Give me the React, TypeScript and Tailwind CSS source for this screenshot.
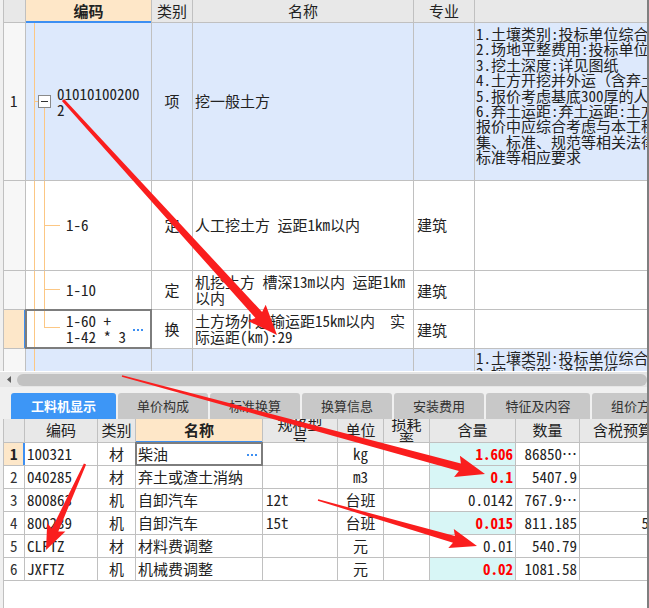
import React from 'react';

type Pt = [number, number];

// tapered annotation arrow: thin tail, wide shaft near head, triangular head
function arrowPoints(from: Pt, tip: Pt, w1: number, w2: number, headLen: number, headHalf: number) {
  const dx = tip[0] - from[0];
  const dy = tip[1] - from[1];
  const len = Math.hypot(dx, dy);
  const ux = dx / len;
  const uy = dy / len;
  const nx = -uy;
  const ny = ux;
  const bx = tip[0] - ux * headLen;
  const by = tip[1] - uy * headLen;
  const pts: Pt[] = [
    [from[0] + (nx * w1) / 2, from[1] + (ny * w1) / 2],
    [bx + (nx * w2) / 2, by + (ny * w2) / 2],
    [bx + nx * headHalf - ux * 3, by + ny * headHalf - uy * 3],
    tip,
    [bx - nx * headHalf - ux * 3, by - ny * headHalf - uy * 3],
    [bx - (nx * w2) / 2, by - (ny * w2) / 2],
    [from[0] - (nx * w1) / 2, from[1] - (ny * w1) / 2],
  ];
  return pts.map((p) => `${p[0].toFixed(1)},${p[1].toFixed(1)}`).join(' ');
}

const arrows = [
  arrowPoints([63, 100], [277, 335], 3, 9, 27, 12),
  arrowPoints([122, 376], [485, 474], 1.5, 8, 26, 11),
  arrowPoints([318, 500], [477, 546], 1.5, 7, 24, 10),
  arrowPoints([85, 464], [46, 550], 2.5, 7, 22, 10),
];

const Dots = () => (
  <span className="flex gap-[2px]">
    <span className="w-[2px] h-[2px] bg-[#3d8ff2]" />
    <span className="w-[2px] h-[2px] bg-[#3d8ff2]" />
    <span className="w-[2px] h-[2px] bg-[#3d8ff2]" />
  </span>
);

const descLines = [
  '1.土壤类别:投标单位综合考虑',
  '2.场地平整费用:投标单位综合考虑',
  '3.挖土深度:详见图纸',
  '4.土方开挖并外运（含弃土场费用）',
  '5.报价考虑基底300厚的人工清底',
  '6.弃土运距:弃土运距:土方外运距离',
  '报价中应综合考虑与本工程相关的',
  '集、标准、规范等相关法律法规',
  '标准等相应要求',
];

interface ResRow {
  n: string;
  code: string;
  type: string;
  name: string;
  spec: string;
  unit: string;
  qty: string;
  red: boolean;
  amt: string;
  price: string;
}

const resRows: ResRow[] = [
  { n: '1', code: '100321', type: '材', name: '柴油', spec: '', unit: 'kg', qty: '1.606', red: true, amt: '86850…', price: '' },
  { n: '2', code: '040285', type: '材', name: '弃土或渣土消纳', spec: '', unit: 'm3', qty: '0.1', red: true, amt: '5407.9', price: '' },
  { n: '3', code: '800863', type: '机', name: '自卸汽车', spec: '12t', unit: '台班', qty: '0.0142', red: false, amt: '767.9…', price: '' },
  { n: '4', code: '800239', type: '机', name: '自卸汽车', spec: '15t', unit: '台班', qty: '0.015', red: true, amt: '811.185', price: '58.69' },
  { n: '5', code: 'CLFTZ', type: '材', name: '材料费调整', spec: '', unit: '元', qty: '0.01', red: false, amt: '540.79', price: '' },
  { n: '6', code: 'JXFTZ', type: '机', name: '机械费调整', spec: '', unit: '元', qty: '0.02', red: true, amt: '1081.58', price: '' },
];

const tabs = ['工料机显示', '单价构成', '标准换算', '换算信息', '安装费用', '特征及内容', '组价方案'];
const tabWidths = ['w-[105px]', 'w-[90px]', 'w-[90px]', 'w-[90px]', 'w-[90px]', 'w-[104px]', 'w-[90px]'];

export default function App() {
  return (
    <div className="relative w-[649px] h-[608px] overflow-hidden bg-[#f0f0f0] border-r-2 border-[#7f7f7f] text-[15px] text-[#222] font-['Noto_Sans_Mono_CJK_SC','Noto_Sans_CJK_SC','DejaVu_Sans_Mono',monospace]">
      {/* top grid: bill items */}
      <div className="h-[371px] ml-[3px] overflow-hidden border-l border-[#c0c0c0] bg-white">
        <div className="flex h-[23px] border-b border-[#c0c0c0] bg-[#e8e8e8] leading-[22px]">
          <div className="w-[22px] shrink-0 border-r border-[#c0c0c0]" />
          <div className="relative w-[126px] shrink-0 border-r border-[#c0c0c0] bg-[#fee7c8] font-bold text-center">
            编码
            <span className="absolute left-0 right-0 bottom-[-1px] h-[2px] bg-[#3d8ff2]" />
          </div>
          <div className="w-[41px] shrink-0 border-r border-[#c0c0c0] text-center">类别</div>
          <div className="w-[221px] shrink-0 border-r border-[#c0c0c0] text-center">名称</div>
          <div className="w-[61px] shrink-0 border-r border-[#c0c0c0] text-center">专业</div>
          <div className="w-[200px] shrink-0" />
        </div>

        {/* row 1 */}
        <div className="flex h-[158px] border-b border-[#c0c0c0]">
          <div className="w-[22px] shrink-0 border-r border-[#c0c0c0] bg-[#f7f7f7] flex items-center pl-[6px]">1</div>
          <div className="relative w-[126px] shrink-0 border-r border-[#c0c0c0] bg-[#dde9fc] flex items-center pl-[31px] leading-[16px]">
            <span className="absolute left-[8px] top-0 bottom-0 w-px bg-[#fcc784]" />
            <span className="absolute left-[8px] top-[78px] w-[4px] h-px bg-[#fcc784]" />
            <span className="absolute left-[12px] top-[72px] w-[13px] h-[13px] border border-[#8a8a8a] bg-white flex items-center justify-center">
              <span className="w-[7px] h-px bg-[#333]" />
            </span>
            <span className="absolute left-[18px] top-[85px] bottom-0 w-px bg-[#fcc784]" />
            <div className="flex flex-col">
              <span>01010100200</span>
              <span>2</span>
            </div>
          </div>
          <div className="w-[41px] shrink-0 border-r border-[#c0c0c0] bg-[#dde9fc] flex items-center justify-center">项</div>
          <div className="w-[221px] shrink-0 border-r border-[#c0c0c0] bg-[#dde9fc] flex items-center pl-[2px]">挖一般土方</div>
          <div className="w-[61px] shrink-0 border-r border-[#c0c0c0] bg-[#dde9fc]" />
          <div className="w-[200px] shrink-0 bg-[#dde9fc] pl-[1px] pt-[3px] leading-[15.4px] whitespace-nowrap overflow-hidden">
            {descLines.map((l) => (
              <div key={l}>{l}</div>
            ))}
          </div>
        </div>

        {/* row 2 */}
        <div className="flex h-[90px] border-b border-[#c0c0c0]">
          <div className="w-[22px] shrink-0 border-r border-[#c0c0c0] bg-[#f7f7f7]" />
          <div className="relative w-[126px] shrink-0 border-r border-[#c0c0c0] flex items-center pl-[40px]">
            <span className="absolute left-[8px] top-0 bottom-0 w-px bg-[#fcc784]" />
            <span className="absolute left-[18px] top-0 bottom-0 w-px bg-[#fcc784]" />
            <span className="absolute left-[18px] top-[44px] w-[16px] h-px bg-[#fcc784]" />
            1-6
          </div>
          <div className="w-[41px] shrink-0 border-r border-[#c0c0c0] flex items-center justify-center">定</div>
          <div className="w-[221px] shrink-0 border-r border-[#c0c0c0] flex items-center pl-[2px] whitespace-nowrap">人工挖土方 运距1km以内</div>
          <div className="w-[61px] shrink-0 border-r border-[#c0c0c0] flex items-center pl-[3px]">建筑</div>
          <div className="w-[200px] shrink-0" />
        </div>

        {/* row 3 */}
        <div className="flex h-[39px] border-b border-[#c0c0c0]">
          <div className="w-[22px] shrink-0 border-r border-[#c0c0c0] bg-[#f7f7f7]" />
          <div className="relative w-[126px] shrink-0 border-r border-[#c0c0c0] flex items-center pl-[40px]">
            <span className="absolute left-[8px] top-0 bottom-0 w-px bg-[#fcc784]" />
            <span className="absolute left-[18px] top-0 bottom-0 w-px bg-[#fcc784]" />
            <span className="absolute left-[18px] top-[18px] w-[16px] h-px bg-[#fcc784]" />
            1-10
          </div>
          <div className="w-[41px] shrink-0 border-r border-[#c0c0c0] flex items-center justify-center">定</div>
          <div className="w-[221px] shrink-0 border-r border-[#c0c0c0] flex flex-col justify-center pl-[2px] leading-[16px] whitespace-nowrap">
            <span>机挖土方 槽深13m以内 运距1km</span>
            <span>以内</span>
          </div>
          <div className="w-[61px] shrink-0 border-r border-[#c0c0c0] flex items-center pl-[3px] pt-[2px]">建筑</div>
          <div className="w-[200px] shrink-0" />
        </div>

        {/* row 4 (selected) */}
        <div className="flex h-[39px] border-b border-[#c0c0c0]">
          <div className="w-[22px] shrink-0 border-r-2 border-[#3d8ff2] bg-[#fde7c9]" />
          <div className="relative w-[126px] shrink-0 border-r border-[#c0c0c0] flex items-center pl-[40px] leading-[16px]">
            <span className="absolute left-[8px] top-0 bottom-0 w-px bg-[#fcc784]" />
            <span className="absolute left-[18px] top-0 h-[17px] w-px bg-[#fcc784]" />
            <span className="absolute left-[18px] top-[17px] w-[16px] h-px bg-[#fcc784]" />
            <div className="flex flex-col whitespace-pre">
              <span>1-60 +</span>
              <span>1-42 * 3</span>
            </div>
            <span className="absolute left-[107px] top-[19px]">
              <Dots />
            </span>
            <span className="absolute left-[-1px] top-[-1px] right-[-1px] bottom-[-1px] border-2 border-[#7d7d7d]" />
          </div>
          <div className="w-[41px] shrink-0 border-r border-[#c0c0c0] flex items-center justify-center">换</div>
          <div className="w-[221px] shrink-0 border-r border-[#c0c0c0] flex flex-col justify-center pl-[2px] leading-[16px] whitespace-pre">
            <span>土方场外运输运距15km以内  实</span>
            <span>际运距(km):29</span>
          </div>
          <div className="w-[61px] shrink-0 border-r border-[#c0c0c0] flex items-center pl-[3px] pt-[2px]">建筑</div>
          <div className="w-[200px] shrink-0" />
        </div>

        {/* row 5 (partly visible) */}
        <div className="flex h-[60px]">
          <div className="w-[22px] shrink-0 border-r border-[#c0c0c0] bg-[#f7f7f7]" />
          <div className="relative w-[126px] shrink-0 border-r border-[#c0c0c0] bg-[#dde9fc]">
            <span className="absolute left-[8px] top-0 bottom-0 w-px bg-[#fcc784]" />
          </div>
          <div className="w-[41px] shrink-0 border-r border-[#c0c0c0] bg-[#dde9fc]" />
          <div className="w-[221px] shrink-0 border-r border-[#c0c0c0] bg-[#dde9fc]" />
          <div className="w-[61px] shrink-0 border-r border-[#c0c0c0] bg-[#dde9fc]" />
          <div className="w-[200px] shrink-0 bg-[#dde9fc] pl-[1px] pt-[1px] leading-[15.4px] whitespace-nowrap">
            <div>1.土壤类别:投标单位综合考虑</div>
            <div>2.挖土深度:详见图纸</div>
          </div>
        </div>
      </div>

      {/* horizontal scrollbar */}
      <div className="h-px bg-white" />
      <div className="flex items-center h-[15px] bg-[#e6e6e6]">
        <svg width="17" height="15" viewBox="0 0 17 15" className="shrink-0">
          <path d="M7 7.5 L11 4 L11 11 Z" fill="#606060" />
        </svg>
        <div className="flex-1 h-[12px] rounded-full bg-[#c2c2c2]" />
      </div>

      {/* tabs */}
      <div className="flex gap-[2px] pl-[11px] pt-[6px] h-[32px]">
        {tabs.map((t, i) => (
          <div
            key={t}
            className={`${tabWidths[i]} shrink-0 h-[26px] rounded-t-[3px] flex items-center justify-center text-[13px] ${
              i === 0 ? 'bg-[#3d96f6] text-white font-bold' : 'bg-[#c8c8c8] text-[#333]'
            }`}
          >
            {t}
          </div>
        ))}
      </div>

      {/* bottom grid: resources */}
      <div className="ml-[3px] h-[300px] overflow-hidden border-l border-[#c0c0c0] bg-white">
        <div className="flex h-[24px] border-b border-[#c0c0c0] bg-[#e8e8e8]">
          <div className="w-[21px] shrink-0 border-r border-[#c0c0c0]" />
          <div className="w-[73px] shrink-0 border-r border-[#c0c0c0] flex items-center justify-center">编码</div>
          <div className="w-[38px] shrink-0 border-r border-[#c0c0c0] flex items-center justify-center">类别</div>
          <div className="relative w-[127px] shrink-0 border-r border-[#c0c0c0] bg-[#fee7c8] font-bold flex items-center justify-center">
            名称
            <span className="absolute left-0 right-0 bottom-[-1px] h-[2px] bg-[#3d8ff2]" />
          </div>
          <div className="w-[75px] shrink-0 border-r border-[#c0c0c0] overflow-hidden flex flex-col items-center justify-center leading-[14px]">
            <span>规格型</span>
            <span>号</span>
          </div>
          <div className="w-[46px] shrink-0 border-r border-[#c0c0c0] flex items-center justify-center">单位</div>
          <div className="w-[46px] shrink-0 border-r border-[#c0c0c0] overflow-hidden flex flex-col items-center justify-center leading-[14px]">
            <span>损耗</span>
            <span>率</span>
          </div>
          <div className="w-[86px] shrink-0 border-r border-[#c0c0c0] flex items-center justify-center">含量</div>
          <div className="w-[64px] shrink-0 border-r border-[#c0c0c0] flex items-center justify-center">数量</div>
          <div className="w-[101px] shrink-0 flex items-center justify-center">含税预算价</div>
        </div>

        {resRows.map((r, i) => (
          <div key={r.n} className="flex h-[23px] border-b border-[#c0c0c0] leading-[22px]">
            <div
              className={`w-[21px] shrink-0 pl-[6px] ${
                i === 0 ? 'border-r-2 border-[#3d8ff2] bg-[#fde7c9] font-bold' : 'border-r border-[#c0c0c0] text-[#333]'
              }`}
            >
              {r.n}
            </div>
            <div className="w-[73px] shrink-0 border-r border-[#c0c0c0] pl-[2px]">{r.code}</div>
            <div className="w-[38px] shrink-0 border-r border-[#c0c0c0] text-center">{r.type}</div>
            <div className="relative w-[127px] shrink-0 border-r border-[#c0c0c0] pl-[2px]">
              {r.name}
              {i === 0 && (
                <>
                  <span className="absolute right-[5px] top-[11px]">
                    <Dots />
                  </span>
                  <span className="absolute left-[-1px] top-[-1px] right-[-1px] bottom-[-1px] border-2 border-[#7d7d7d]" />
                </>
              )}
            </div>
            <div className="w-[75px] shrink-0 border-r border-[#c0c0c0] pl-[3px]">{r.spec}</div>
            <div className="w-[46px] shrink-0 border-r border-[#c0c0c0] text-center">{r.unit}</div>
            <div className="w-[46px] shrink-0 border-r border-[#c0c0c0]" />
            <div
              className={`w-[86px] shrink-0 border-r border-[#c0c0c0] text-right pr-[2px] ${
                r.red ? 'bg-[#d8f6f6] text-[#ff0000] font-bold' : ''
              }`}
            >
              {r.qty}
            </div>
            <div className="w-[64px] shrink-0 border-r border-[#c0c0c0] text-right pr-[2px] whitespace-nowrap">{r.amt}</div>
            <div className="w-[101px] shrink-0 text-right pr-[2px]">{r.price}</div>
          </div>
        ))}
      </div>

      {/* red annotation arrows drawn over the screenshot */}
      <svg className="absolute inset-0 pointer-events-none" width="649" height="608" viewBox="0 0 649 608">
        {arrows.map((p, i) => (
          <polygon key={i} points={p} fill="#fa1e1e" />
        ))}
      </svg>
    </div>
  );
}
